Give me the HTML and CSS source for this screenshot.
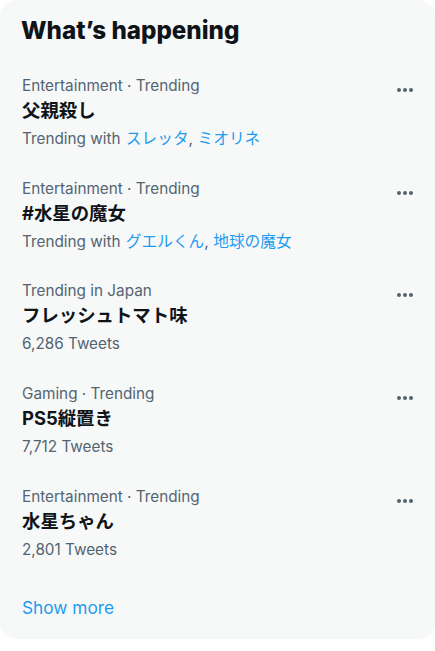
FILE: index.html
```html
<!DOCTYPE html>
<html lang="ja">
<head>
<meta charset="utf-8">
<title>What's happening</title>
<link rel="stylesheet" href="styles.css">
</head>
<body>
<section class="card">
  <h2 class="card-title">What’s happening</h2>

  <div class="trend">
    <div class="trend-body">
      <div class="trend-meta">Entertainment · Trending</div>
      <div class="trend-name">父親殺し</div>
      <div class="trend-sub">Trending with <span class="links"><a class="link" href="#">スレッタ</a>, <a class="link" href="#">ミオリネ</a></span></div>
    </div>
    <div class="more"><span></span><span></span><span></span></div>
  </div>

  <div class="trend">
    <div class="trend-body">
      <div class="trend-meta">Entertainment · Trending</div>
      <div class="trend-name">#水星の魔女</div>
      <div class="trend-sub">Trending with <span class="links"><a class="link" href="#">グエルくん</a>, <a class="link" href="#">地球の魔女</a></span></div>
    </div>
    <div class="more"><span></span><span></span><span></span></div>
  </div>

  <div class="trend">
    <div class="trend-body">
      <div class="trend-meta">Trending in Japan</div>
      <div class="trend-name">フレッシュトマト味</div>
      <div class="trend-sub">6,286 Tweets</div>
    </div>
    <div class="more"><span></span><span></span><span></span></div>
  </div>

  <div class="trend">
    <div class="trend-body">
      <div class="trend-meta">Gaming · Trending</div>
      <div class="trend-name">PS5縦置き</div>
      <div class="trend-sub">7,712 Tweets</div>
    </div>
    <div class="more"><span></span><span></span><span></span></div>
  </div>

  <div class="trend">
    <div class="trend-body">
      <div class="trend-meta">Entertainment · Trending</div>
      <div class="trend-name">水星ちゃん</div>
      <div class="trend-sub">2,801 Tweets</div>
    </div>
    <div class="more"><span></span><span></span><span></span></div>
  </div>

  <a class="show-more" href="#">Show more</a>
</section>
</body>
</html>
```

FILE: styles.css
```css
html, body {
  margin: 0;
  padding: 0;
  background: #ffffff;
}

body {
  font-family: Inter, "Noto Sans CJK JP", sans-serif;
  color: #0f1419;
}

.card {
  width: 435px;
  background: #f7f9f9;
  border-radius: 16px;
  padding-bottom: 3px;
}

.card-title {
  margin: 0;
  padding: 17px 22px 16px 21px;
  font-size: 24.2px;
  line-height: 28px;
  font-weight: 800;
  color: #0f1419;
}

.trend {
  display: flex;
  align-items: flex-start;
  padding: 15.9px 22px 15.85px 22px;
}

.trend-body {
  flex: 1;
  display: flex;
  flex-direction: column;
}

.trend-meta {
  font-size: 15.3px;
  line-height: 18px;
  color: #536471;
}

.trend-name {
  margin-top: 4px;
  font-size: 18.4px;
  line-height: 23px;
  font-weight: 700;
  color: #0f1419;
}

.trend-sub {
  margin-top: 8px;
  font-size: 15.3px;
  line-height: 18px;
  color: #536471;
}

.links {
  margin-left: 1px;
  font-size: 15.7px;
}

.link {
  color: #1d9bf0;
  text-decoration: none;
}

.more {
  display: flex;
  gap: 2px;
  margin-top: 11px;
}

.more span {
  width: 4px;
  height: 4px;
  border-radius: 50%;
  background: #536471;
}

.show-more {
  display: block;
  padding: 21px 22px 17px;
  font-size: 17.3px;
  line-height: 23px;
  color: #1d9bf0;
  text-decoration: none;
}
```
